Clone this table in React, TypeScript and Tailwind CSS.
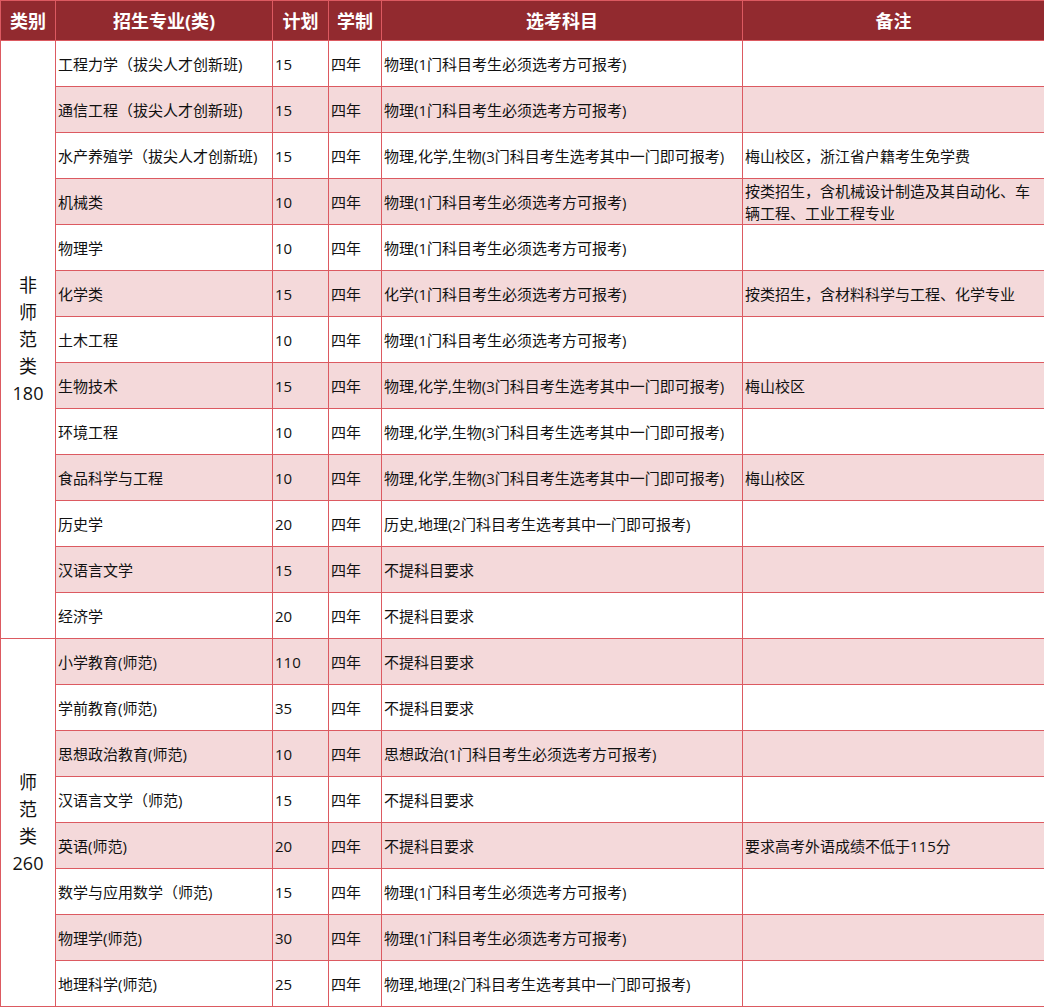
import React from 'react'

type Row = {
  major: string
  plan: string
  subjects: string
  note?: string
}

const groups: { label: string[]; count: string; rows: Row[] }[] = [
  {
    label: ['非', '师', '范', '类'],
    count: '180',
    rows: [
      { major: '工程力学（拔尖人才创新班)', plan: '15', subjects: '物理(1门科目考生必须选考方可报考)' },
      { major: '通信工程（拔尖人才创新班)', plan: '15', subjects: '物理(1门科目考生必须选考方可报考)' },
      {
        major: '水产养殖学（拔尖人才创新班)',
        plan: '15',
        subjects: '物理,化学,生物(3门科目考生选考其中一门即可报考)',
        note: '梅山校区，浙江省户籍考生免学费',
      },
      {
        major: '机械类',
        plan: '10',
        subjects: '物理(1门科目考生必须选考方可报考)',
        note: '按类招生，含机械设计制造及其自动化、车辆工程、工业工程专业',
      },
      { major: '物理学', plan: '10', subjects: '物理(1门科目考生必须选考方可报考)' },
      {
        major: '化学类',
        plan: '15',
        subjects: '化学(1门科目考生必须选考方可报考)',
        note: '按类招生，含材料科学与工程、化学专业',
      },
      { major: '土木工程', plan: '10', subjects: '物理(1门科目考生必须选考方可报考)' },
      {
        major: '生物技术',
        plan: '15',
        subjects: '物理,化学,生物(3门科目考生选考其中一门即可报考)',
        note: '梅山校区',
      },
      { major: '环境工程', plan: '10', subjects: '物理,化学,生物(3门科目考生选考其中一门即可报考)' },
      {
        major: '食品科学与工程',
        plan: '10',
        subjects: '物理,化学,生物(3门科目考生选考其中一门即可报考)',
        note: '梅山校区',
      },
      { major: '历史学', plan: '20', subjects: '历史,地理(2门科目考生选考其中一门即可报考)' },
      { major: '汉语言文学', plan: '15', subjects: '不提科目要求' },
      { major: '经济学', plan: '20', subjects: '不提科目要求' },
    ],
  },
  {
    label: ['师', '范', '类'],
    count: '260',
    rows: [
      { major: '小学教育(师范)', plan: '110', subjects: '不提科目要求' },
      { major: '学前教育(师范)', plan: '35', subjects: '不提科目要求' },
      { major: '思想政治教育(师范)', plan: '10', subjects: '思想政治(1门科目考生必须选考方可报考)' },
      { major: '汉语言文学（师范)', plan: '15', subjects: '不提科目要求' },
      { major: '英语(师范)', plan: '20', subjects: '不提科目要求', note: '要求高考外语成绩不低于115分' },
      { major: '数学与应用数学（师范)', plan: '15', subjects: '物理(1门科目考生必须选考方可报考)' },
      { major: '物理学(师范)', plan: '30', subjects: '物理(1门科目考生必须选考方可报考)' },
      { major: '地理科学(师范)', plan: '25', subjects: '物理,地理(2门科目考生选考其中一门即可报考)' },
    ],
  },
]

const cell = 'border border-[#dc5a61] px-[2px] text-left align-middle'

export default function App() {
  let index = 0
  return (
    <div className="w-[1044px] bg-white font-['Open_Sans','Noto_Sans_CJK_SC',sans-serif] text-[15px] leading-[22px] text-[#111]">
      <table className="w-[1044px] table-fixed border-collapse">
        <colgroup>
          <col className="w-[55px]" />
          <col className="w-[217px]" />
          <col className="w-[56px]" />
          <col className="w-[53px]" />
          <col className="w-[361px]" />
          <col className="w-[302px]" />
        </colgroup>
        <thead>
          <tr className="h-[40px] bg-[#922a2f] text-[18px] font-bold text-white">
            <th className="border border-[#dc5a61] text-center">类别</th>
            <th className="border border-[#dc5a61] text-center">招生专业(类)</th>
            <th className="border border-[#dc5a61] text-center">计划</th>
            <th className="border border-[#dc5a61] text-center">学制</th>
            <th className="border border-[#dc5a61] text-center">选考科目</th>
            <th className="border border-[#dc5a61] text-center">备注</th>
          </tr>
        </thead>
        <tbody>
          {groups.map((group) =>
            group.rows.map((row, i) => {
              const striped = index++ % 2 === 1
              return (
                <tr key={row.major} className={striped ? 'h-[46px] bg-[#f4d9da]' : 'h-[46px] bg-white'}>
                  {i === 0 && (
                    <td
                      rowSpan={group.rows.length}
                      className="border border-[#dc5a61] bg-white text-center align-middle text-[18px] leading-[27px]"
                    >
                      {group.label.map((ch) => (
                        <div key={ch}>{ch}</div>
                      ))}
                      <div>{group.count}</div>
                    </td>
                  )}
                  <td className={cell}>{row.major}</td>
                  <td className={cell}>{row.plan}</td>
                  <td className={cell}>四年</td>
                  <td className={cell}>{row.subjects}</td>
                  <td className={cell}>{row.note}</td>
                </tr>
              )
            }),
          )}
        </tbody>
      </table>
    </div>
  )
}
